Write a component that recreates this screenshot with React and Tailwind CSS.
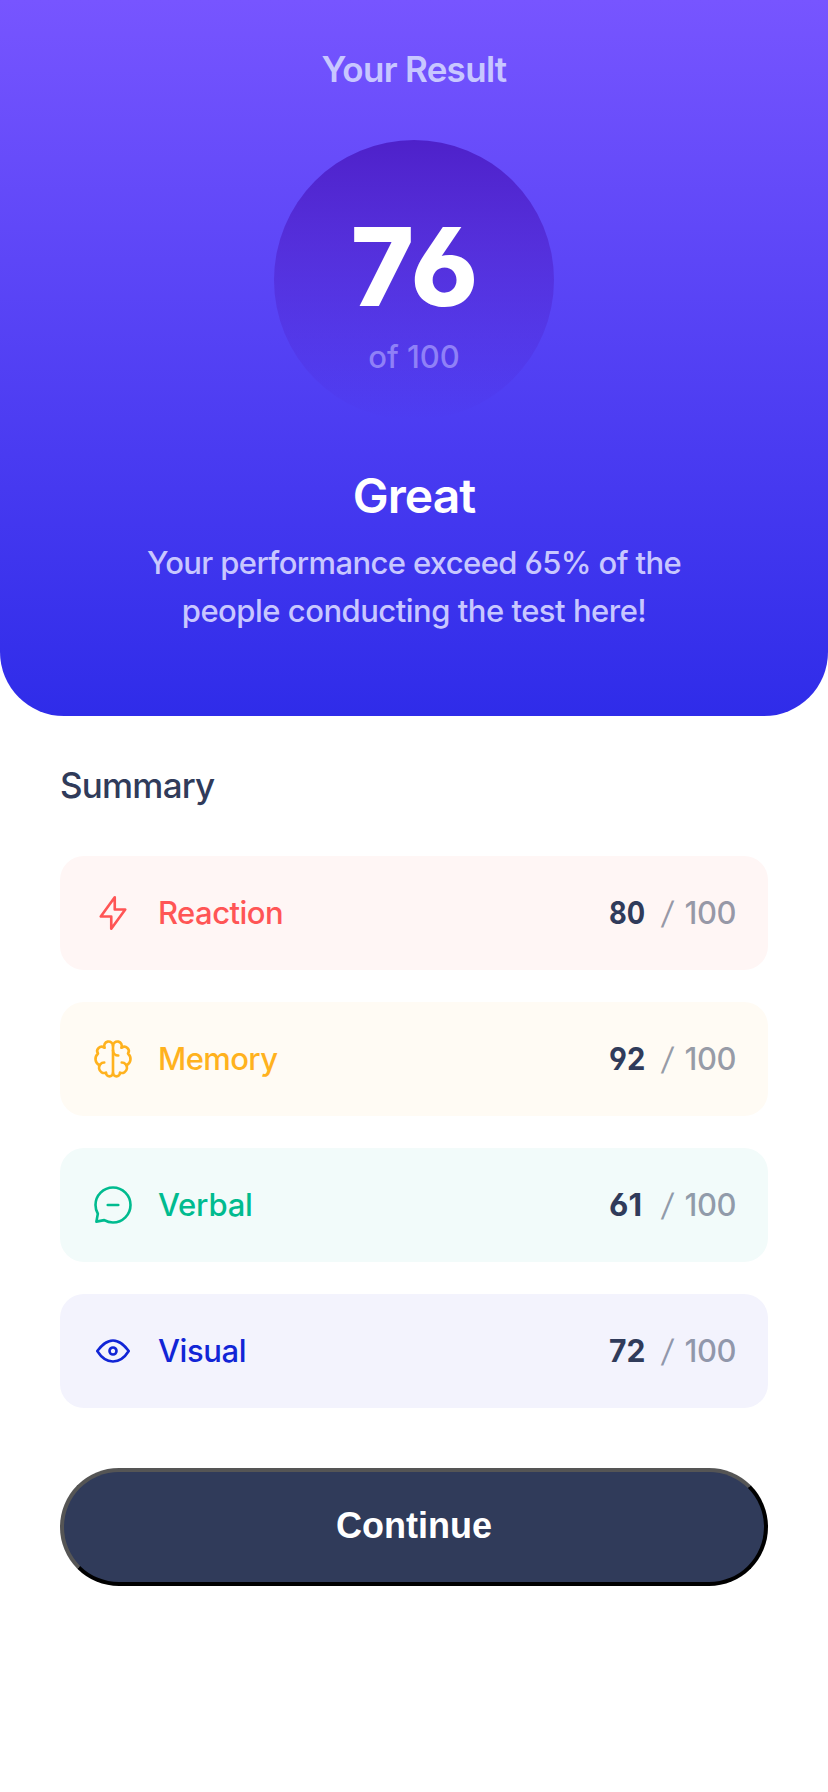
const icons = {
  reaction: ["M10.833 8.333V2.5l-6.666 9.167h5V17.5l6.666-9.167h-5Z"],
  memory: [
    "M5.833 11.667a2.5 2.5 0 1 0 .834 4.858",
    "M3.553 13.004a3.333 3.333 0 0 1-.728-5.53m.025-.067a2.083 2.083 0 0 1 2.983-2.824m.199.054A2.083 2.083 0 1 1 10 3.75v12.917a1.667 1.667 0 0 1-3.333 0",
    "M14.167 11.667a2.5 2.5 0 1 1-.834 4.858",
    "M16.447 13.004a3.334 3.334 0 0 0 .728-5.53m-.025-.067a2.083 2.083 0 0 0-2.983-2.824M10 3.75a2.085 2.085 0 0 1 2.538-2.033 2.084 2.084 0 0 1 1.43 2.92m-.635 12.03a1.667 1.667 0 0 1-3.333 0",
    "M10 5.833a2.5 2.5 0 0 0 2.5 2.5",
  ],
  verbal: [
    "M7.5 10h5M10 18.333A8.333 8.333 0 1 0 1.667 10c0 1.518.406 2.942 1.115 4.167l-.699 3.75 3.75-.699A8.295 8.295 0 0 0 10 18.333Z",
  ],
  visual: [
    "M10 11.667a1.667 1.667 0 1 0 0-3.334 1.667 1.667 0 0 0 0 3.334Z",
    "M17.5 10c-1.574 2.492-4.402 5-7.5 5s-5.926-2.508-7.5-5C4.416 7.632 6.66 5 10 5s5.584 2.632 7.5 5Z",
  ],
};

const rows = [
  { id: "reaction", label: "Reaction", score: 80, tone: "bg-[#fff6f5] text-[#ff5555]", track: "tracking-[-0.55px]", fit: "scale-x-[0.88]" },
  { id: "memory", label: "Memory", score: 92, tone: "bg-[#fffbf4] text-[#ffb21e]", track: "tracking-[-0.6px]", fit: "scale-x-[0.94]" },
  { id: "verbal", label: "Verbal", score: 61, tone: "bg-[#f2fbfa] text-[#00bb8f]", track: "tracking-[-0.2px]", fit: "scale-x-[1.02]" },
  { id: "visual", label: "Visual", score: 72, tone: "bg-[#f3f3fd] text-[#1125d6]", track: "tracking-[-0.4px]", fit: "scale-x-[0.97]" },
];

function Icon({ name }) {
  return (
    <svg viewBox="0 0 20 20" className="size-[42px] shrink-0" fill="none" stroke="currentColor" strokeWidth="1.25" strokeLinecap="round" strokeLinejoin="round">
      {icons[name].map((d) => (
        <path key={d} d={d} />
      ))}
    </svg>
  );
}

export default function App() {
  return (
    <main className="min-h-[1792px] bg-white font-['Inter',sans-serif] font-medium [font-feature-settings:'cv03','cv04']">
      <header className="flex h-[716px] flex-col items-center rounded-b-[64px] bg-linear-to-b/srgb from-[#7755ff] to-[#2f2ce9] pt-[45px] text-center text-[#c8c7ff]">
        <h1 className="text-[35px] leading-[48px] font-semibold tracking-[-0.7px]">Your Result</h1>
        <div className="mt-[47px] flex size-[280px] flex-col items-center rounded-full bg-linear-to-b/srgb from-[#4e21ca] to-[#2421ca]/0 pt-[68px]">
          <strong className="pl-[3px] text-[108px] leading-[118px] font-extrabold tracking-[2px] text-white">76</strong>
          <span className="mt-[11px] text-[31px] leading-[40px] text-[#8f80f7]">of 100</span>
        </div>
        <h2 className="mt-[44px] text-[48px] leading-[64px] font-semibold tracking-[-1px] text-white">Great</h2>
        <p className="mt-[11px] w-[600px] text-[31px] leading-[48px] tracking-[-0.62px]">
          Your performance exceed 65% of the
          <br />
          <span className="tracking-[-0.5px]">people conducting the test here!</span>
        </p>
      </header>
      <section className="px-[60px] pt-[45px]">
        <h2 className="text-[35px] leading-[48px] tracking-[-0.8px] text-[#303b5a]">Summary</h2>
        <ul className="mt-[47px] flex flex-col gap-8">
          {rows.map((r) => (
            <li key={r.id} className={`flex h-[114px] items-center rounded-3xl pr-8 pl-8 text-[31px] leading-[40px] ${r.tone}`}>
              <Icon name={r.id} />
              <span className={`ml-[24px] ${r.track}`}>{r.label}</span>
              <span className="ml-auto w-[53px] text-[#303b5a]">
                <span className={`inline-block origin-left font-bold ${r.fit}`}>{r.score}</span>
              </span>
              <span className="flex text-[#303b5a]/50">
                <span className="w-[23px] -skew-x-8 font-normal">/</span>
                <span className="tracking-[-0.5px]">100</span>
              </span>
            </li>
          ))}
        </ul>
        <button className="mt-[60px] h-[118px] w-full rounded-full border-4 border-t-[#555] border-r-black border-b-black border-l-[#555] bg-[#303b5a] pb-[3px] font-['Liberation_Sans',sans-serif] text-[36px] font-bold text-white">
          Continue
        </button>
      </section>
    </main>
  );
}
